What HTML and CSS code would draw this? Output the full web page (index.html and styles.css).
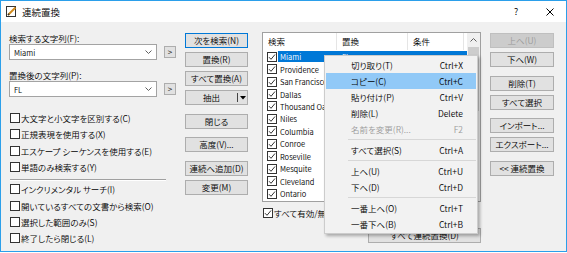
FILE: index.html
```html
<!DOCTYPE html>
<html lang="ja">
<head>
  <meta charset="UTF-8">
  <title>連続置換</title>
  <link rel="stylesheet" href="styles.css">
</head>
<body>

  <div class="window">
    <div class="titlebar">
      <svg class="app-icon" width="11" height="11" viewBox="0 0 11 11">
        <rect x="0.5" y="0.5" width="9" height="10" fill="#fff" stroke="#333"/>
        <line x1="2" y1="9" x2="9.5" y2="1.5" stroke="#d08a1c" stroke-width="2"/>
        <line x1="2" y1="9" x2="3.2" y2="7.8" stroke="#333" stroke-width="1.4"/>
      </svg>
      <span class="title">連続置換</span>
      <span class="tb-btn help">?</span>
      <span class="tb-btn close">
        <svg width="8" height="8" viewBox="0 0 8 8"><path d="M0.5 0.5 L7.5 7.5 M7.5 0.5 L0.5 7.5" stroke="#000" stroke-width="1"/></svg>
      </span>
    </div>

    <div class="dialog">
      <!-- search / replace fields and options -->
      <div class="col-left">
        <div class="field-label">検索する文字列(F):</div>
        <div class="combo-row">
          <div class="combo"><span>Miami</span><svg class="chev" width="7" height="4" viewBox="0 0 7 4"><path d="M0.5 0.5 L3.5 3.5 L6.5 0.5" fill="none" stroke="#606060"/></svg></div>
          <span class="mini-btn">&gt;</span>
        </div>
        <div class="field-label second">置換後の文字列(P):</div>
        <div class="combo-row">
          <div class="combo"><span>FL</span><svg class="chev" width="7" height="4" viewBox="0 0 7 4"><path d="M0.5 0.5 L3.5 3.5 L6.5 0.5" fill="none" stroke="#606060"/></svg></div>
          <span class="mini-btn">&gt;</span>
        </div>

        <div class="options">
          <div class="check"><span class="box"></span>大文字と小文字を区別する(C)</div>
          <div class="check"><span class="box"></span>正規表現を使用する(X)</div>
          <div class="check"><span class="box"></span>エスケープ シーケンスを使用する(E)</div>
          <div class="check"><span class="box"></span>単語のみ検索する(Y)</div>
        </div>
        <div class="etched"></div>
        <div class="options">
          <div class="check"><span class="box"></span>インクリメンタル サーチ(I)</div>
          <div class="check"><span class="box"></span>開いているすべての文書から検索(O)</div>
          <div class="check"><span class="box"></span>選択した範囲のみ(S)</div>
          <div class="check"><span class="box"></span>終了したら閉じる(L)</div>
        </div>
      </div>

      <!-- action buttons -->
      <div class="col-mid">
        <div class="btn default">次を検索(N)</div>
        <div class="btn">置換(R)</div>
        <div class="btn">すべて置換(A)</div>
        <div class="btn split"><span class="split-main">抽出</span><span class="split-arrow"><svg width="6" height="4" viewBox="0 0 6 4"><path d="M0 0 H6 L3 3.5 Z" fill="#000"/></svg></span></div>
        <div class="btn gap">閉じる</div>
        <div class="btn gap-s">高度(V)...</div>
        <div class="btn gap">連続へ追加(D)</div>
        <div class="btn">変更(M)</div>
      </div>

      <!-- replacement list -->
      <div class="col-list">
        <div class="list">
          <div class="list-main">
            <div class="list-head">
              <span class="hcell h1">検索</span>
              <span class="hcell h2">置換</span>
              <span class="hcell h3">条件</span>
            </div>
            <div class="row sel"><span class="box checked"></span><span class="cells"><span class="c1">Miami</span><span class="c2">FL</span></span></div>
            <div class="row"><span class="box checked"></span><span class="cells"><span class="c1">Providence</span><span class="c2">RI</span></span></div>
            <div class="row"><span class="box checked"></span><span class="cells"><span class="c1">San Francisco</span><span class="c2">CA</span></span></div>
            <div class="row"><span class="box checked"></span><span class="cells"><span class="c1">Dallas</span><span class="c2">TX</span></span></div>
            <div class="row"><span class="box checked"></span><span class="cells"><span class="c1">Thousand Oaks</span><span class="c2">CA</span></span></div>
            <div class="row"><span class="box checked"></span><span class="cells"><span class="c1">Niles</span><span class="c2">IL</span></span></div>
            <div class="row"><span class="box checked"></span><span class="cells"><span class="c1">Columbia</span><span class="c2">SC</span></span></div>
            <div class="row"><span class="box checked"></span><span class="cells"><span class="c1">Conroe</span><span class="c2">TX</span></span></div>
            <div class="row"><span class="box checked"></span><span class="cells"><span class="c1">Roseville</span><span class="c2">CA</span></span></div>
            <div class="row"><span class="box checked"></span><span class="cells"><span class="c1">Mesquite</span><span class="c2">TX</span></span></div>
            <div class="row"><span class="box checked"></span><span class="cells"><span class="c1">Cleveland</span><span class="c2">OH</span></span></div>
            <div class="row"><span class="box checked"></span><span class="cells"><span class="c1">Ontario</span><span class="c2">CA</span></span></div>
          </div>
          <div class="scrollbar">
            <div class="sb-up"><svg width="7" height="4" viewBox="0 0 7 4"><path d="M0.5 3.5 L3.5 0.5 L6.5 3.5" fill="none" stroke="#606060"/></svg></div>
            <div class="sb-thumb"></div>
          </div>
        </div>
        <div class="list-foot"><span class="box checked"></span>すべて有効/無効</div>
        <div class="btn wide">すべて連続置換(D)</div>
      </div>

      <!-- list buttons -->
      <div class="col-right">
        <div class="btn disabled">上へ(U)</div>
        <div class="btn">下へ(W)</div>
        <div class="btn gap">削除(T)</div>
        <div class="btn">すべて選択</div>
        <div class="btn gap-s">インポート...</div>
        <div class="btn">エクスポート...</div>
        <div class="btn gap">&lt;&lt; 連続置換</div>
      </div>
    </div>

    <!-- context menu over the list -->
    <div class="menu">
      <div class="mi"><span>切り取り(T)</span><span class="key">Ctrl+X</span></div>
      <div class="mi hover"><span>コピー(C)</span><span class="key">Ctrl+C</span></div>
      <div class="mi"><span>貼り付け(P)</span><span class="key">Ctrl+V</span></div>
      <div class="mi"><span>削除(L)</span><span class="key">Delete</span></div>
      <div class="mi off"><span>名前を変更(R)...</span><span class="key">F2</span></div>
      <div class="msep"></div>
      <div class="mi"><span>すべて選択(S)</span><span class="key">Ctrl+A</span></div>
      <div class="msep"></div>
      <div class="mi"><span>上へ(U)</span><span class="key">Ctrl+U</span></div>
      <div class="mi"><span>下へ(D)</span><span class="key">Ctrl+D</span></div>
      <div class="msep"></div>
      <div class="mi"><span>一番上へ(O)</span><span class="key">Ctrl+T</span></div>
      <div class="mi"><span>一番下へ(B)</span><span class="key">Ctrl+B</span></div>
    </div>
  </div>

</body>
</html>
```

FILE: styles.css
```css
body {
  margin: 0;
  background-color: #fff;
  font-family: "Noto Sans CJK JP", "Noto Sans", sans-serif;
  font-size: 8.5px;
  font-weight: 350;
  font-feature-settings: "palt";
  color: #000;
}

.window {
  position: relative;
  width: 567px;
  height: 252px;
  box-sizing: border-box;
  border: 1px solid #2b9fea;
  background-color: #f0f0f0;
  display: flex;
  flex-direction: column;
}

/* title bar */
.titlebar {
  height: 21px;
  flex-shrink: 0;
  background-color: #fff;
  display: flex;
  align-items: center;
}

.app-icon {
  margin-left: 5px;
}

.title {
  margin-left: 5px;
  font-size: 9.5px;
}

.tb-btn {
  width: 34px;
  text-align: center;
  font-size: 9px;
  display: flex;
  justify-content: center;
  align-items: center;
}

.help {
  margin-left: auto;
}

.close {
  width: 33px;
}

/* dialog body */
.dialog {
  flex: 1;
  display: flex;
  align-items: flex-start;
  padding-left: 8px;
}

.col-left {
  width: 167px;
  padding-top: 10px;
}

.field-label {
  height: 12px;
  line-height: 12px;
}

.field-label.second {
  margin-top: 9px;
}

.combo-row {
  display: flex;
  align-items: center;
}

.combo {
  width: 148px;
  height: 16px;
  box-sizing: border-box;
  border: 1px solid #a3a3a3;
  background-color: #fff;
  display: flex;
  align-items: center;
  padding: 0 4px;
  font-size: 7.5px;
}

.combo span {
  flex: 1;
}

.mini-btn {
  margin-left: 7px;
  width: 12px;
  height: 12px;
  box-sizing: border-box;
  border: 1px solid #adadad;
  background-color: #e1e1e1;
  line-height: 10px;
  text-align: center;
  font-size: 8px;
}

.options {
  margin-top: 13px;
}

.etched + .options {
  margin-top: 0;
}

.check {
  height: 16.3px;
  display: flex;
  align-items: center;
  white-space: nowrap;
}

.box {
  width: 10px;
  height: 10px;
  flex-shrink: 0;
  box-sizing: border-box;
  border: 1px solid #333;
  background-color: #fff;
  margin: 0 1px;
}

.box.checked {
  background: #fff url("data:image/svg+xml,%3Csvg xmlns='http://www.w3.org/2000/svg' width='8' height='8' viewBox='0 0 8 8'%3E%3Cpath d='M1 4.2 L3 6.3 L7 1.5' fill='none' stroke='%23333' stroke-width='1'/%3E%3C/svg%3E") center no-repeat;
}

.etched {
  margin: 4px 0 0 1px;
  width: 156px;
  border-top: 1px solid #a0a0a0;
  border-bottom: 1px solid #fff;
}

/* buttons */
.btn {
  height: 15px;
  box-sizing: border-box;
  border: 1px solid #adadad;
  background-color: #e1e1e1;
  line-height: 13px;
  text-align: center;
  white-space: nowrap;
  margin-top: 4px;
}

.btn:first-child {
  margin-top: 0;
}

.btn.default {
  border-color: #0078d7;
}

.btn.disabled {
  background-color: #cccccc;
  border-color: #bfbfbf;
  color: #9a9a9a;
}

.btn.gap {
  margin-top: 9px;
}

.btn.gap-s {
  margin-top: 8px;
}

.btn.split {
  display: flex;
}

.split-main {
  flex: 1;
}

.split-arrow {
  width: 9px;
  border-left: 1px solid #444;
  margin: 2px 0;
  display: flex;
  align-items: center;
  justify-content: center;
}

.col-mid {
  width: 63px;
  margin-left: 9px;
  padding-top: 11px;
}

.col-right {
  width: 64px;
  margin-left: 9px;
  padding-top: 11px;
}

/* list */
.col-list {
  width: 219px;
  margin-left: 14px;
  padding-top: 10px;
  display: flex;
  flex-direction: column;
}

.list {
  height: 170px;
  box-sizing: border-box;
  border: 1px solid #a0a0a0;
  background-color: #fff;
  display: flex;
  overflow: hidden;
}

.list-main {
  flex: 1;
}

.list-head {
  height: 17px;
  display: flex;
  margin-bottom: 0.5px;
}

.hcell {
  box-sizing: border-box;
  border-right: 1px solid #e5e5e5;
  padding-left: 5px;
  line-height: 17px;
}

.h1 {
  width: 74px;
}

.h2 {
  width: 71px;
}

.h3 {
  width: 56px;
}

.row {
  height: 12.45px;
  display: flex;
  align-items: center;
  padding-left: 4px;
  white-space: nowrap;
  font-size: 7.5px;
}

.row .box {
  margin: 0 1px 0 0;
}

.cells {
  flex: 1;
  height: 11px;
  display: flex;
  align-items: center;
}

.row.sel .cells {
  background-color: #0078d7;
  color: #fff;
}

.c1 {
  width: 59px;
  box-sizing: border-box;
  padding-left: 2px;
  overflow: hidden;
}

.c2 {
  padding-left: 5px;
}

.scrollbar {
  width: 13px;
  background-color: #f0f0f0;
  display: flex;
  flex-direction: column;
}

.sb-up {
  height: 14px;
  display: flex;
  align-items: center;
  justify-content: center;
}

.sb-thumb {
  height: 64px;
  margin: 0 1px;
  background-color: #cdcdcd;
}

.list-foot {
  height: 12px;
  margin-top: 5px;
  display: flex;
  align-items: center;
  white-space: nowrap;
}

.btn.wide {
  width: 113px;
  margin-top: 9px;
  margin-left: auto;
}

/* context menu */
.menu {
  position: absolute;
  left: 323px;
  top: 54px;
  width: 154px;
  box-sizing: border-box;
  border: 1px solid #cccccc;
  background-color: #f2f2f2;
  padding: 1px;
  box-shadow: 2px 2px 3px rgba(0, 0, 0, 0.3);
}

.mi {
  height: 16px;
  display: flex;
  align-items: center;
  padding-left: 25px;
  padding-right: 13px;
}

.mi span:first-child {
  flex: 1;
}

.mi.hover {
  background-color: #91c9f7;
}

.mi.off {
  color: #9a9a9a;
}

.msep {
  height: 5px;
  margin-left: 22px;
  position: relative;
}

.msep::after {
  content: "";
  position: absolute;
  left: 0;
  right: 0;
  top: 2px;
  border-top: 1px solid #d7d7d7;
}
```
